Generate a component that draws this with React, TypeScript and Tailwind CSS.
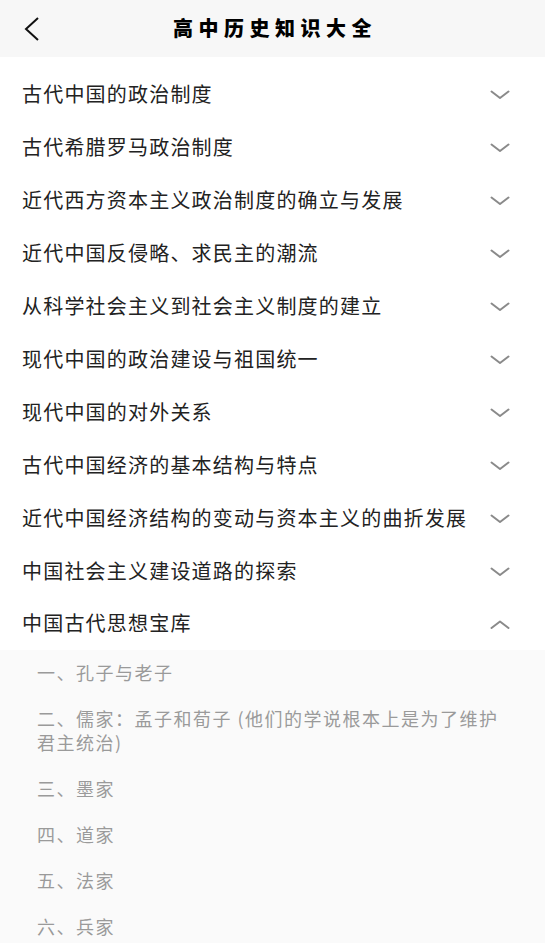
import React from "react";

const items = [
  "古代中国的政治制度",
  "古代希腊罗马政治制度",
  "近代西方资本主义政治制度的确立与发展",
  "近代中国反侵略、求民主的潮流",
  "从科学社会主义到社会主义制度的建立",
  "现代中国的政治建设与祖国统一",
  "现代中国的对外关系",
  "古代中国经济的基本结构与特点",
  "近代中国经济结构的变动与资本主义的曲折发展",
  "中国社会主义建设道路的探索",
];

const subs = [
  "一、孔子与老子",
  "二、儒家：孟子和荀子 (他们的学说根本上是为了维护君主统治)",
  "三、墨家",
  "四、道家",
  "五、法家",
  "六、兵家",
];

function Chevron({ up }: { up?: boolean }) {
  return (
    <svg width="20" height="10" viewBox="0 0 20 10" className="shrink-0">
      <path
        d={up ? "M1.5 9 L10 2.5 L18.5 9" : "M1.5 1.5 L10 8 L18.5 1.5"}
        fill="none"
        stroke="#8a8a8a"
        strokeWidth="2"
        strokeLinecap="round"
        strokeLinejoin="round"
      />
    </svg>
  );
}

export default function App() {
  return (
    <div
      className="w-[545px] h-[943px] overflow-hidden bg-white"
      style={{ fontFamily: '"Noto Sans CJK SC", "Noto Sans", sans-serif' }}
    >
      <div className="h-[57px] bg-[#f7f7f7] flex items-center relative">
        <div className="absolute left-[22px] top-[16px]">
          <svg width="20" height="26" viewBox="0 0 20 26">
            <path d="M16 2 L4 13 L16 24" fill="none" stroke="#111" strokeWidth="2" strokeLinejoin="miter" />
          </svg>
        </div>
        <div className="flex-1 text-center text-[20px] font-black tracking-[5.5px] text-black pl-[5px] pb-[1px]">
          高中历史知识大全
        </div>
      </div>
      <div className="pt-[11px]">
        {items.map((t) => (
          <div key={t} className="h-[53px] flex items-center justify-between pl-[22px] pr-[35px]">
            <span className="text-[20px] leading-[28px] pb-[2px] tracking-[1.2px] text-[#222]">{t}</span>
            <Chevron />
          </div>
        ))}
        <div className="h-[52px] flex items-center justify-between pl-[22px] pr-[35px]">
          <span className="text-[20px] leading-[28px] pb-[2px] tracking-[1.2px] text-[#222]">中国古代思想宝库</span>
          <Chevron up />
        </div>
        <div className="bg-[#fafafa] pl-[37px] pr-[38px]">
          {subs.map((s) => (
            <div key={s} className="pt-[10px] pb-[12px] text-[18px] leading-[24px] tracking-[1.5px] text-[#9a9a9a]">
              {s}
            </div>
          ))}
        </div>
      </div>
    </div>
  );
}
